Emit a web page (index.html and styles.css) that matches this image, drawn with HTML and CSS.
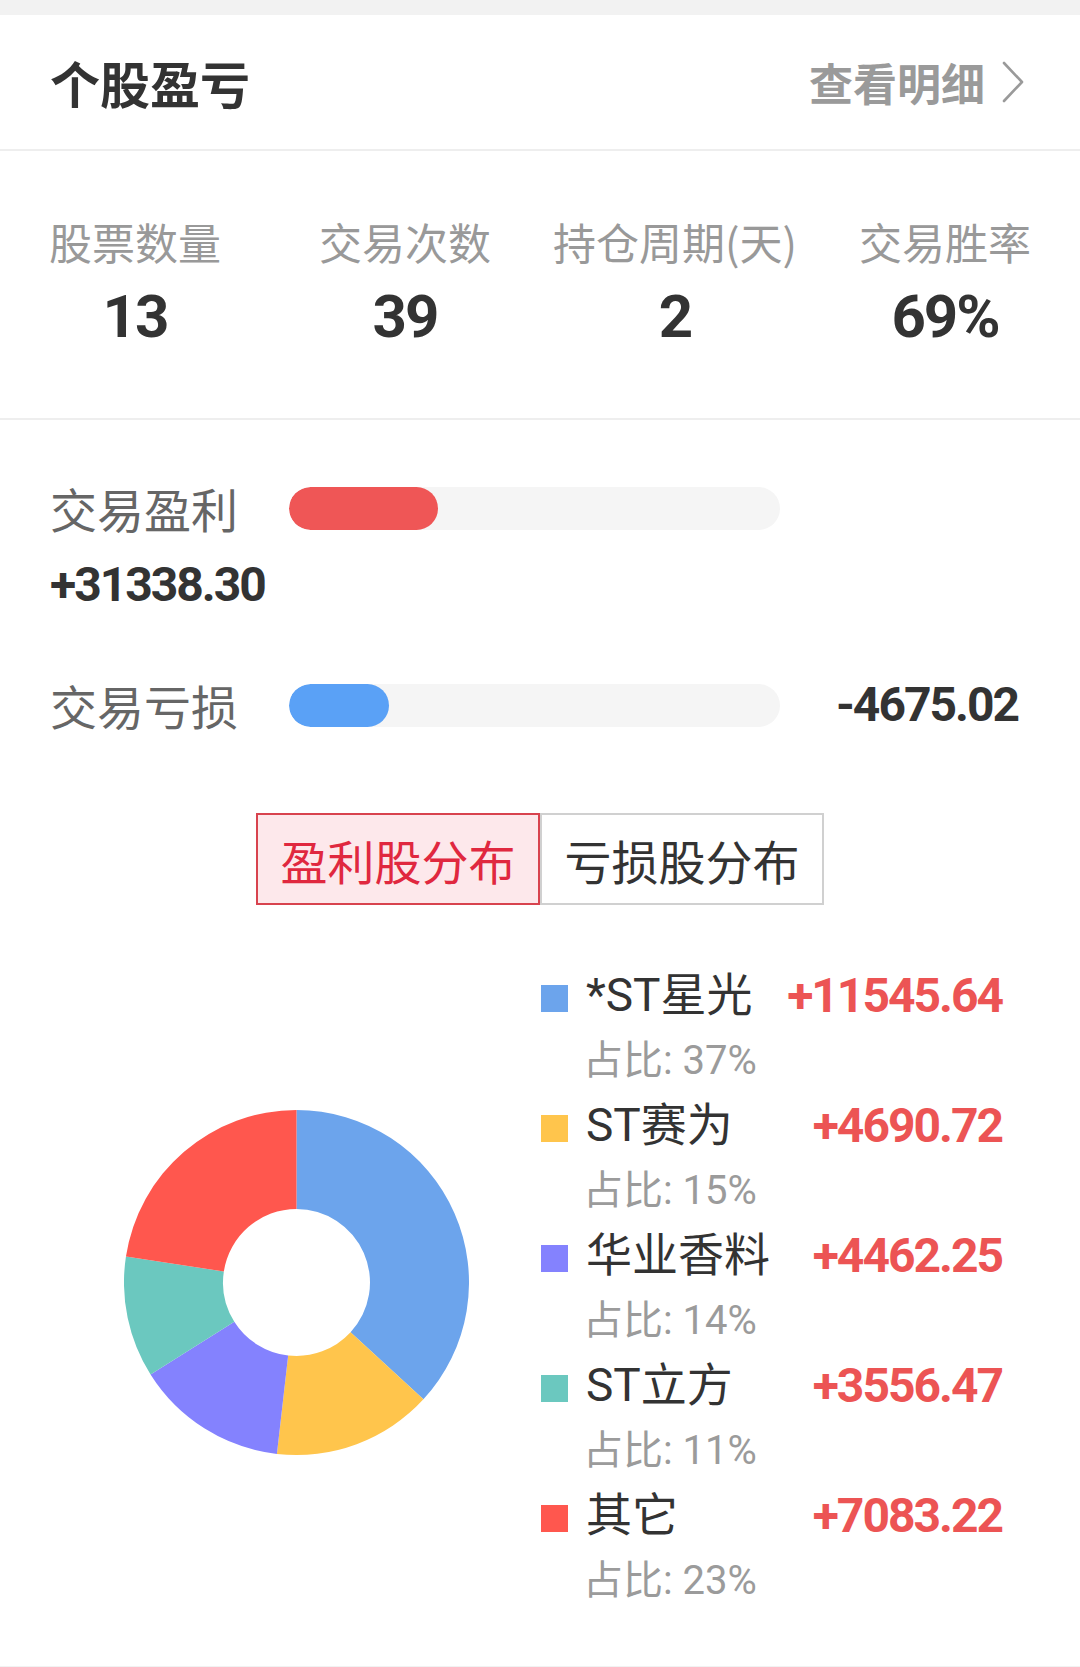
FILE: index.html
```html
<!DOCTYPE html>
<html lang="zh-CN">
<head>
<meta charset="utf-8">
<title>个股盈亏</title>
<link rel="stylesheet" href="styles.css">
</head>
<body>
<div class="card">
  <div class="header">
    <div class="title">个股盈亏</div>
    <div class="more">
      <span>查看明细</span>
      <svg class="chev" width="22" height="42" viewBox="0 0 22 42"><path d="M2 2 L20 21 L2 40" fill="none" stroke="#9a9a9a" stroke-width="2.6" stroke-linecap="round" stroke-linejoin="round"/></svg>
    </div>
  </div>

  <div class="stats">
    <div class="stat"><div class="stat-label">股票数量</div><div class="stat-num">13</div></div>
    <div class="stat"><div class="stat-label">交易次数</div><div class="stat-num">39</div></div>
    <div class="stat"><div class="stat-label">持仓周期(天)</div><div class="stat-num">2</div></div>
    <div class="stat"><div class="stat-label">交易胜率</div><div class="stat-num">69%</div></div>
  </div>

  <div class="bars">
    <div class="bar-row">
      <div class="bar-label">交易盈利</div>
      <div class="track"><div class="fill fill-red" style="width:149px"></div></div>
    </div>
    <div class="bar-value-line">+31338.30</div>
    <div class="bar-row bar-row-loss">
      <div class="bar-label">交易亏损</div>
      <div class="track"><div class="fill fill-blue" style="width:100px"></div></div>
      <div class="bar-value">-4675.02</div>
    </div>
  </div>

  <div class="tabs">
    <div class="tab tab-active">盈利股分布</div>
    <div class="tab">亏损股分布</div>
  </div>

  <div class="chart">
    <div class="pie">
      <svg width="345" height="345" viewBox="0 0 345 345">
        <path fill="#6ca4ec" d="M172.5 0 A172.5 172.5 0 0 1 299.41 289.33 L226.57 222.28 A73.5 73.5 0 0 0 172.5 99 Z"/>
        <path fill="#ffc54c" d="M299.41 289.33 A172.5 172.5 0 0 1 152.92 343.88 L164.16 245.52 A73.5 73.5 0 0 0 226.57 222.28 Z"/>
        <path fill="#8482fe" d="M152.92 343.88 A172.5 172.5 0 0 1 26.55 264.46 L110.31 211.68 A73.5 73.5 0 0 0 164.16 245.52 Z"/>
        <path fill="#6bc8bf" d="M26.55 264.46 A172.5 172.5 0 0 1 1.95 146.59 L99.83 161.46 A73.5 73.5 0 0 0 110.31 211.68 Z"/>
        <path fill="#ff574e" d="M1.95 146.59 A172.5 172.5 0 0 1 172.5 0 L172.5 99 A73.5 73.5 0 0 0 99.83 161.46 Z"/>
      </svg>
    </div>
    <div class="legend">
      <div class="item">
        <div class="item-main"><span class="sq sq-blue"></span><span class="name">*ST星光</span><span class="val">+11545.64</span></div>
        <div class="pct">占比: 37%</div>
      </div>
      <div class="item">
        <div class="item-main"><span class="sq sq-yellow"></span><span class="name">ST赛为</span><span class="val">+4690.72</span></div>
        <div class="pct">占比: 15%</div>
      </div>
      <div class="item">
        <div class="item-main"><span class="sq sq-purple"></span><span class="name">华业香料</span><span class="val">+4462.25</span></div>
        <div class="pct">占比: 14%</div>
      </div>
      <div class="item">
        <div class="item-main"><span class="sq sq-teal"></span><span class="name">ST立方</span><span class="val">+3556.47</span></div>
        <div class="pct">占比: 11%</div>
      </div>
      <div class="item">
        <div class="item-main"><span class="sq sq-red"></span><span class="name">其它</span><span class="val">+7083.22</span></div>
        <div class="pct">占比: 23%</div>
      </div>
    </div>
  </div>
</div>
</body>
</html>
```

FILE: styles.css
```css
* { box-sizing: border-box; }
html, body { margin: 0; padding: 0; }
body {
  background: #f2f2f2;
  font-family: "Roboto", "Noto Sans CJK SC", sans-serif;
  color: #333;
}
.card {
  margin-top: 15px;
  background: #fff;
}
.header {
  height: 136px;
  border-bottom: 2px solid #eeeeee;
  display: flex;
  align-items: center;
  justify-content: space-between;
  padding: 0 56px 0 50px;
}
.title {
  font-family: "Noto Sans CJK SC", sans-serif;
  font-weight: 700;
  font-size: 50px;
  line-height: 60px;
  color: #333;
}
.more {
  display: flex;
  align-items: center;
  gap: 17px;
  font-family: "Noto Sans CJK SC", sans-serif;
  font-weight: 700;
  font-size: 44px;
  line-height: 60px;
  color: #9a9a9a;
}
.chev { display: block; }
.stats {
  display: grid;
  grid-template-columns: repeat(4, 1fr);
  padding: 65px 0 66px;
  border-bottom: 2px solid #eeeeee;
}
.stat { text-align: center; }
.stat-label {
  font-family: "Noto Sans CJK SC", sans-serif;
  font-size: 43px;
  line-height: 50px;
  color: #999;
}
.stat-num {
  margin-top: 16px;
  font-family: "Roboto", sans-serif;
  font-weight: 700;
  font-size: 60px;
  line-height: 70px;
  letter-spacing: -2px;
  color: #333;
}
.bars {
  padding: 58px 62px 0 50px;
}
.bar-row {
  display: flex;
  align-items: center;
  height: 60px;
}
.bar-row-loss { margin-top: 60px; }
.bar-label {
  width: 239px;
  font-family: "Noto Sans CJK SC", sans-serif;
  font-size: 47px;
  line-height: 60px;
  color: #666;
}
.track {
  width: 491px;
  height: 43px;
  border-radius: 22px;
  background: #f5f5f5;
  overflow: hidden;
}
.fill { height: 100%; border-radius: 22px; }
.fill-red { background: #ef5656; }
.fill-blue { background: #5aa1f6; }
.bar-value, .bar-value-line {
  font-family: "Roboto", sans-serif;
  font-weight: 700;
  font-size: 48px;
  line-height: 60px;
  letter-spacing: -2px;
  color: #333;
}
.bar-value { margin-left: auto; }
.bar-value-line { margin-top: 17px; }
.tabs {
  margin-top: 78px;
  display: flex;
  justify-content: center;
}
.tab {
  width: 284px;
  height: 92px;
  display: flex;
  align-items: center;
  justify-content: center;
  border: 2px solid #d0d0d0;
  font-family: "Noto Sans CJK SC", sans-serif;
  font-size: 47px;
  color: #333;
}
.tab-active {
  border-color: #d8434e;
  background: #fde8eb;
  color: #e0283f;
}
.chart {
  display: flex;
  align-items: flex-start;
  margin-top: 58px;
  padding: 0 0 53px 124px;
}
.pie { width: 345px; height: 345px; flex: none; margin-top: 147px; }
.pie svg { display: block; }
.legend {
  margin-left: 72px;
  width: 461px;
}
.item-main {
  display: flex;
  align-items: center;
  height: 65px;
}
.sq {
  width: 27px;
  height: 27px;
  flex: none;
  margin-top: 6px;
}
.sq-blue { background: #6ca4ec; }
.sq-yellow { background: #ffc54c; }
.sq-purple { background: #8482fe; }
.sq-teal { background: #6bc8bf; }
.sq-red { background: #ff574e; }
.name {
  margin-left: 18px;
  font-family: "Roboto", "Noto Sans CJK SC", sans-serif;
  font-size: 46px;
  line-height: 65px;
  color: #333;
}
.val {
  margin-left: auto;
  font-family: "Roboto", sans-serif;
  font-weight: 700;
  font-size: 48px;
  line-height: 65px;
  letter-spacing: -2px;
  color: #ec5454;
}
.pct {
  padding-left: 42px;
  font-family: "Roboto", "Noto Sans CJK SC", sans-serif;
  font-size: 40px;
  line-height: 65px;
  color: #9b9b9b;
}
```
